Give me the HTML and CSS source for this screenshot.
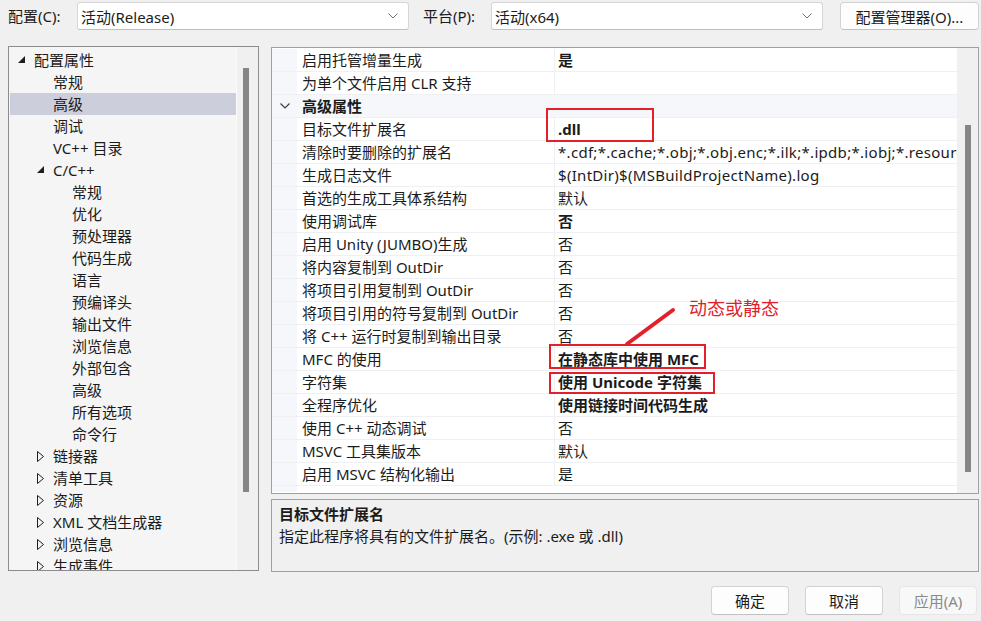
FILE: index.html
```html
<!DOCTYPE html>
<html lang="zh-CN">

<head>
    <meta charset="UTF-8">
    <title>属性页</title>
    <link rel="stylesheet" href="styles.css">
</head>

<body>
    <div class="dialog">
        <!-- 配置 / 平台 -->
        <div class="toolbar">
            <span class="field-label">配置(C):</span>
            <div class="combo">
                <span>活动(Release)</span>
                <svg class="combo-arrow" width="10" height="6" viewBox="0 0 10 6"><polyline points="0.5,0.5 5,5 9.5,0.5" /></svg>
            </div>
            <span class="field-label platform-label">平台(P):</span>
            <div class="combo">
                <span>活动(x64)</span>
                <svg class="combo-arrow" width="10" height="6" viewBox="0 0 10 6"><polyline points="0.5,0.5 5,5 9.5,0.5" /></svg>
            </div>
            <button class="btn btn-manager">配置管理器(O)...</button>
        </div>

        <div class="content">
            <!-- 左侧树 -->
            <div class="tree-panel">
                <ul class="tree">
                    <li class="tree-item lvl-0"><span class="caret"><svg width="8" height="8" viewBox="0 0 8 8"><polygon points="7,0 7,7 0,7" class="tri-open" /></svg></span>配置属性</li>
                    <li class="tree-item lvl-1"><span class="caret"></span>常规</li>
                    <li class="tree-item lvl-1 selected"><span class="caret"></span>高级</li>
                    <li class="tree-item lvl-1"><span class="caret"></span>调试</li>
                    <li class="tree-item lvl-1"><span class="caret"></span>VC++ 目录</li>
                    <li class="tree-item lvl-1"><span class="caret"><svg width="8" height="8" viewBox="0 0 8 8"><polygon points="7,0 7,7 0,7" class="tri-open" /></svg></span>C/C++</li>
                    <li class="tree-item lvl-2"><span class="caret"></span>常规</li>
                    <li class="tree-item lvl-2"><span class="caret"></span>优化</li>
                    <li class="tree-item lvl-2"><span class="caret"></span>预处理器</li>
                    <li class="tree-item lvl-2"><span class="caret"></span>代码生成</li>
                    <li class="tree-item lvl-2"><span class="caret"></span>语言</li>
                    <li class="tree-item lvl-2"><span class="caret"></span>预编译头</li>
                    <li class="tree-item lvl-2"><span class="caret"></span>输出文件</li>
                    <li class="tree-item lvl-2"><span class="caret"></span>浏览信息</li>
                    <li class="tree-item lvl-2"><span class="caret"></span>外部包含</li>
                    <li class="tree-item lvl-2"><span class="caret"></span>高级</li>
                    <li class="tree-item lvl-2"><span class="caret"></span>所有选项</li>
                    <li class="tree-item lvl-2"><span class="caret"></span>命令行</li>
                    <li class="tree-item lvl-1"><span class="caret"><svg width="8" height="11" viewBox="0 0 8 11"><polygon points="0.5,0.5 6.5,5.5 0.5,10.5" class="tri-closed" /></svg></span>链接器</li>
                    <li class="tree-item lvl-1"><span class="caret"><svg width="8" height="11" viewBox="0 0 8 11"><polygon points="0.5,0.5 6.5,5.5 0.5,10.5" class="tri-closed" /></svg></span>清单工具</li>
                    <li class="tree-item lvl-1"><span class="caret"><svg width="8" height="11" viewBox="0 0 8 11"><polygon points="0.5,0.5 6.5,5.5 0.5,10.5" class="tri-closed" /></svg></span>资源</li>
                    <li class="tree-item lvl-1"><span class="caret"><svg width="8" height="11" viewBox="0 0 8 11"><polygon points="0.5,0.5 6.5,5.5 0.5,10.5" class="tri-closed" /></svg></span>XML 文档生成器</li>
                    <li class="tree-item lvl-1"><span class="caret"><svg width="8" height="11" viewBox="0 0 8 11"><polygon points="0.5,0.5 6.5,5.5 0.5,10.5" class="tri-closed" /></svg></span>浏览信息</li>
                    <li class="tree-item lvl-1"><span class="caret"><svg width="8" height="11" viewBox="0 0 8 11"><polygon points="0.5,0.5 6.5,5.5 0.5,10.5" class="tri-closed" /></svg></span>生成事件</li>
                </ul>
                <div class="tree-scroll">
                    <div class="tree-thumb"></div>
                </div>
            </div>

            <!-- 右侧属性网格 -->
            <div class="right-col">
                <div class="grid-panel">
                    <div class="prop-rows">
                        <div class="prop-row"><div class="gutter"></div><div class="prop-name">启用托管增量生成</div><div class="prop-value bold">是</div></div>
                        <div class="prop-row"><div class="gutter"></div><div class="prop-name">为单个文件启用 CLR 支持</div><div class="prop-value"></div></div>
                        <div class="prop-row category">
                            <div class="gutter"><svg width="10" height="6" viewBox="0 0 10 6"><polyline points="0.5,0.5 5,5 9.5,0.5" /></svg></div>
                            <div class="cat-name">高级属性</div>
                        </div>
                        <div class="prop-row"><div class="gutter"></div><div class="prop-name">目标文件扩展名</div><div class="prop-value bold">.dll</div></div>
                        <div class="prop-row"><div class="gutter"></div><div class="prop-name">清除时要删除的扩展名</div><div class="prop-value latin">*.cdf;*.cache;*.obj;*.obj.enc;*.ilk;*.ipdb;*.iobj;*.resources;*.tlb;*.tli;*.tlh;*.tmp;*.rsp;*.pgc;*.pgd</div></div>
                        <div class="prop-row"><div class="gutter"></div><div class="prop-name">生成日志文件</div><div class="prop-value latin">$(IntDir)$(MSBuildProjectName).log</div></div>
                        <div class="prop-row"><div class="gutter"></div><div class="prop-name">首选的生成工具体系结构</div><div class="prop-value">默认</div></div>
                        <div class="prop-row"><div class="gutter"></div><div class="prop-name">使用调试库</div><div class="prop-value bold">否</div></div>
                        <div class="prop-row"><div class="gutter"></div><div class="prop-name">启用 Unity (JUMBO)生成</div><div class="prop-value">否</div></div>
                        <div class="prop-row"><div class="gutter"></div><div class="prop-name">将内容复制到 OutDir</div><div class="prop-value">否</div></div>
                        <div class="prop-row"><div class="gutter"></div><div class="prop-name">将项目引用复制到 OutDir</div><div class="prop-value">否</div></div>
                        <div class="prop-row"><div class="gutter"></div><div class="prop-name">将项目引用的符号复制到 OutDir</div><div class="prop-value">否</div></div>
                        <div class="prop-row"><div class="gutter"></div><div class="prop-name">将 C++ 运行时复制到输出目录</div><div class="prop-value">否</div></div>
                        <div class="prop-row"><div class="gutter"></div><div class="prop-name">MFC 的使用</div><div class="prop-value bold">在静态库中使用 MFC</div></div>
                        <div class="prop-row"><div class="gutter"></div><div class="prop-name">字符集</div><div class="prop-value bold">使用 Unicode 字符集</div></div>
                        <div class="prop-row"><div class="gutter"></div><div class="prop-name">全程序优化</div><div class="prop-value bold">使用链接时间代码生成</div></div>
                        <div class="prop-row"><div class="gutter"></div><div class="prop-name">使用 C++ 动态调试</div><div class="prop-value">否</div></div>
                        <div class="prop-row"><div class="gutter"></div><div class="prop-name">MSVC 工具集版本</div><div class="prop-value">默认</div></div>
                        <div class="prop-row"><div class="gutter"></div><div class="prop-name">启用 MSVC 结构化输出</div><div class="prop-value">是</div></div>
                        <div class="prop-row filler"><div class="gutter"></div></div>
                    </div>
                    <div class="grid-scroll">
                        <div class="grid-thumb"></div>
                    </div>
                </div>

                <div class="desc-panel">
                    <div class="desc-title">目标文件扩展名</div>
                    <div class="desc-text">指定此程序将具有的文件扩展名。(示例: .exe 或 .dll)</div>
                </div>
            </div>
        </div>

        <div class="footer">
            <button class="btn btn-action">确定</button>
            <button class="btn btn-action">取消</button>
            <button class="btn btn-action disabled">应用(A)</button>
        </div>

        <!-- 截图上的红色标注 -->
        <div class="annotations">
            <div class="mark mark-dll"></div>
            <div class="mark mark-mfc"></div>
            <div class="mark mark-unicode"></div>
            <svg class="mark-arrow" width="60" height="45" viewBox="0 0 60 45"><line x1="5" y1="40" x2="51" y2="6" /></svg>
            <div class="mark-note">动态或静态</div>
        </div>
    </div>
</body>

</html>
```

FILE: styles.css
```css
/* Colors */
:root {
    --window-bg: #f0f0f0;
    --tree-bg: #f5f5f5;
    --text: #1b1b1b;
    --border-dark: #8c8c8c;
    --border: #a0a0a0;
    --line-light: #eef0f4;
    --gutter-bg: #f5f7fa;
    --selected-bg: #cccedb;
    --thumb: #868686;
    --mark-red: #e3202a;
}

* {
    margin: 0;
    padding: 0;
    box-sizing: border-box;
}

body {
    background-color: var(--window-bg);
    font-family: "Noto Sans", "Noto Sans CJK SC", sans-serif;
    font-size: 15px;
    color: var(--text);
    overflow: hidden;
}

.dialog {
    position: relative;
    width: 981px;
    height: 621px;
}

/* Top toolbar */
.toolbar {
    display: flex;
    align-items: flex-start;
    height: 46px;
    padding: 2px 0 0 8px;
}

.field-label {
    width: 69px;
    height: 28px;
    line-height: 28px;
}

.platform-label {
    width: 68px;
    margin-left: 14px;
}

.combo {
    display: flex;
    align-items: center;
    justify-content: space-between;
    width: 332px;
    height: 28px;
    padding: 0 10px 0 3px;
    background: #fff;
    border: 1px solid #d6d6d6;
    border-bottom-color: #c0c0c0;
    border-radius: 3px;
}

.combo-arrow polyline {
    fill: none;
    stroke: #707070;
    stroke-width: 1;
}

.btn {
    font-family: inherit;
    font-size: 15px;
    color: var(--text);
    background: #fdfdfd;
    border: 1px solid #d3d3d3;
    border-bottom-color: #c2c2c2;
    border-radius: 4px;
}

.btn-manager {
    width: 139px;
    height: 28px;
    margin-left: 17px;
}

/* Main area */
.content {
    display: flex;
    height: 527px;
    padding-left: 8px;
}

.tree-panel {
    display: flex;
    width: 251px;
    height: 525px;
    background: var(--tree-bg);
    border: 1px solid var(--border-dark);
    overflow: hidden;
}

.tree {
    flex: 1;
    list-style: none;
    padding: 2px 0 0 1px;
}

.tree-item {
    display: flex;
    align-items: center;
    height: 22px;
    line-height: 22px;
    white-space: nowrap;
}

.tree-item.selected {
    background: var(--selected-bg);
}

.caret {
    display: inline-flex;
    align-items: center;
    width: 16px;
    height: 22px;
}

.lvl-0 {
    padding-left: 8px;
}

.lvl-1 {
    padding-left: 27px;
}

.lvl-2 {
    padding-left: 46px;
}

.tri-open {
    fill: #1e1e1e;
}

.tri-closed {
    fill: none;
    stroke: #1e1e1e;
    stroke-width: 1;
}

.tree-scroll {
    width: 22px;
    border-left: 1px solid #fbfbfb;
    background: var(--window-bg);
    padding: 21px 0 0 6px;
}

.tree-thumb {
    width: 6px;
    height: 424px;
    background: var(--thumb);
}

.right-col {
    display: flex;
    flex-direction: column;
    width: 708px;
    margin-left: 12px;
}

/* Property grid */
.grid-panel {
    display: flex;
    height: 447px;
    margin-top: 1px;
    background: #fff;
    border: 1px solid var(--border);
    overflow: hidden;
}

.prop-rows {
    flex: 1;
    min-width: 0;
    padding-top: 1px;
}

.prop-row {
    display: grid;
    grid-template-columns: 25px 258px 1fr;
    height: 23px;
    line-height: 22px;
    border-bottom: 1px solid var(--line-light);
    white-space: nowrap;
}

.prop-row.filler {
    height: 6px;
    border-bottom: none;
}

.gutter {
    background: var(--gutter-bg);
    display: flex;
    align-items: center;
    justify-content: center;
}

.gutter polyline {
    fill: none;
    stroke: #404040;
    stroke-width: 1.2;
}

.prop-name {
    padding-left: 5px;
    border-right: 1px solid var(--line-light);
    overflow: hidden;
}

.prop-value {
    padding-left: 3px;
    overflow: hidden;
}

.prop-value.latin {
    letter-spacing: 0.3px;
}

.bold {
    font-weight: bold;
}

.prop-row.category {
    grid-template-columns: 25px 1fr;
    background: var(--gutter-bg);
}

.cat-name {
    padding-left: 5px;
    font-weight: bold;
}

.grid-scroll {
    width: 21px;
    background: var(--window-bg);
    padding: 77px 0 0 8px;
}

.grid-thumb {
    width: 6px;
    height: 347px;
    background: var(--thumb);
}

/* Description */
.desc-panel {
    height: 73px;
    margin-top: 5px;
    padding: 3px 0 0 7px;
    border: 1px solid var(--border);
    line-height: 22px;
}

.desc-title {
    font-weight: bold;
}

/* Bottom buttons */
.footer {
    display: flex;
    justify-content: flex-end;
    gap: 16px;
    padding: 13px 4px 0 0;
}

.btn-action {
    width: 78px;
    height: 29px;
}

.btn-action.disabled {
    color: #8a8a8a;
    background: #f8f8f8;
    border-color: #e6e6e6;
}

/* Red annotations drawn over the screenshot */
.annotations {
    position: absolute;
    inset: 0;
    pointer-events: none;
}

.mark {
    position: absolute;
    border: 2px solid var(--mark-red);
}

.mark-dll {
    left: 546px;
    top: 108px;
    width: 108px;
    height: 34px;
}

.mark-mfc {
    left: 549px;
    top: 344px;
    width: 157px;
    height: 25px;
}

.mark-unicode {
    left: 549px;
    top: 372px;
    width: 166px;
    height: 22px;
}

.mark-arrow {
    position: absolute;
    left: 622px;
    top: 304px;
}

.mark-arrow line {
    stroke: var(--mark-red);
    stroke-width: 4;
    stroke-linecap: round;
}

.mark-note {
    position: absolute;
    left: 689px;
    top: 296px;
    font-size: 18px;
    line-height: 24px;
    color: var(--mark-red);
}
```
